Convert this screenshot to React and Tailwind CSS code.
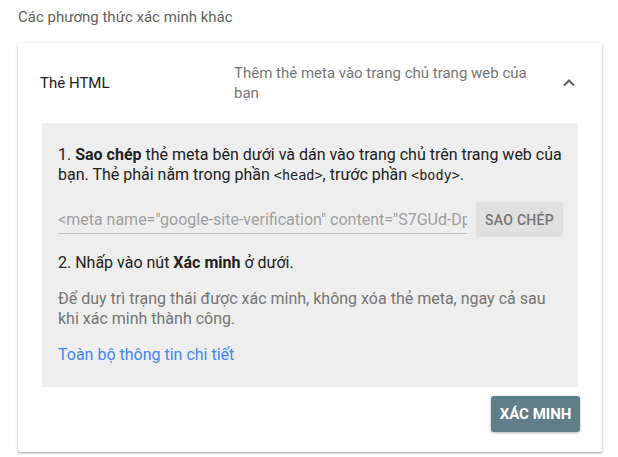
import React from 'react'

function App() {
  return (
    <div className="w-[618px] h-[457px] bg-white font-['Roboto',sans-serif] text-[15px] text-[#212121] overflow-hidden">
      <div className="pl-[18px] pt-[7px] h-[43px] text-[#616161] text-[15px] leading-5">
        Các phương thức xác minh khác
      </div>
      <div className="ml-[18px] w-[584px] bg-white rounded-[2px] shadow-[0_1px_3px_rgba(0,0,0,0.3),0_1px_1px_rgba(0,0,0,0.1)]">
        <div className="flex items-center h-[80px] pl-[22px] pr-[26px]">
          <div className="w-[194px] text-[#212121] leading-5">Thẻ HTML</div>
          <div className="w-[300px] text-[#757575] leading-5">
            Thêm thẻ meta vào trang chủ trang web của bạn
          </div>
          <div className="ml-auto">
            <svg width="14" height="10" viewBox="0 0 14 10">
              <path d="M2 7.5 L7 2.5 L12 7.5" fill="none" stroke="#616161" strokeWidth="2" />
            </svg>
          </div>
        </div>
        <div className="mx-[24px] bg-[#eeeeee] px-[16px] pt-[22px] pb-[22px] text-[16px] leading-5">
          <p>
            1. <b className="font-bold">Sao chép</b> thẻ meta bên dưới và dán vào trang chủ trên trang web của
            bạn. Thẻ phải nằm trong phần <span className="font-['DejaVu_Sans_Mono',monospace] text-[13.5px]">&lt;head&gt;</span>, trước phần <span className="font-['DejaVu_Sans_Mono',monospace] text-[13.5px]">&lt;body&gt;</span>.
          </p>
          <div className="flex items-center mt-[17px]">
            <div className="w-[409px] shrink-0 border-b border-[#bdbdbd] pb-[3px] pt-[4px] leading-5 text-[#9e9e9e] whitespace-nowrap overflow-hidden">
              &lt;meta name="google-site-verification" content="S7GUd-DpXq2pLkJ8hVwz" /&gt;
            </div>
            <button className="ml-[9px] h-[35px] w-[87px] shrink-0 whitespace-nowrap rounded-[3px] bg-[#e0e0e0] text-[#757575] text-[14px] font-medium tracking-[0.3px]">
              SAO CHÉP
            </button>
          </div>
          <p className="mt-[16px]">
            2. Nhấp vào nút <b className="font-bold">Xác minh</b> ở dưới.
          </p>
          <p className="mt-[16px] text-[#757575]">
            Để duy trì trạng thái được xác minh, không xóa thẻ meta, ngay cả sau khi xác minh thành công.
          </p>
          <p className="mt-[16px] text-[#4285f4]">Toàn bộ thông tin chi tiết</p>
        </div>
        <div className="flex justify-end pr-[22px] pt-[9px] pb-[20px]">
          <button className="h-[36px] w-[89px] rounded-[3px] bg-[#607d8b] text-white text-[15px] font-bold shadow-[0_1px_3px_rgba(0,0,0,0.3)]">
            XÁC MINH
          </button>
        </div>
      </div>
    </div>
  )
}

export default App
